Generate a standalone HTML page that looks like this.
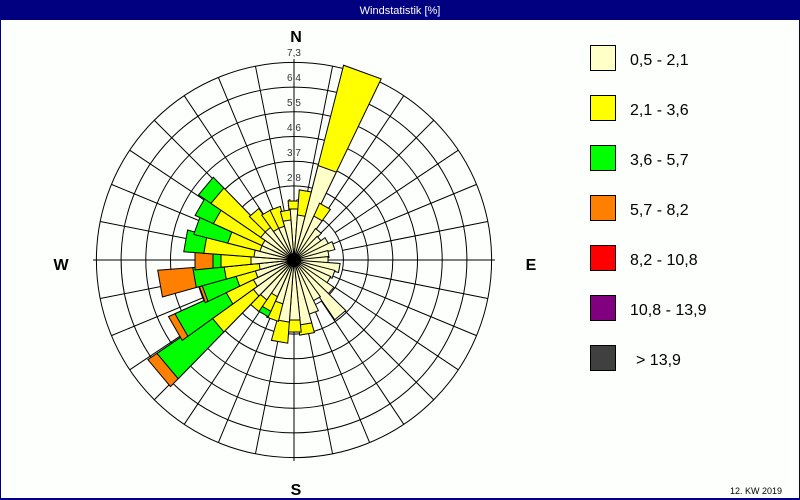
<!DOCTYPE html>
<html><head><meta charset="utf-8"><style>
html,body{margin:0;padding:0;background:#fff}
svg{display:block}
.w{stroke:#000;stroke-width:1;vector-effect:non-scaling-stroke;stroke-linejoin:miter}
.c{fill:#FFFFC8}.y{fill:#FFFF00}.g{fill:#00FF00}.o{fill:#FF8000}
.sp line{stroke:#000;stroke-width:1}
</style></head><body>
<svg width="800" height="500" viewBox="0 0 800 500" xmlns="http://www.w3.org/2000/svg" font-family="Liberation Sans, sans-serif">
<rect x="0" y="0" width="800" height="500" fill="#fcfffc"/>
<rect x="0" y="0" width="800" height="20" fill="#000080"/>
<rect x="0" y="0" width="1" height="500" fill="#000080"/>
<rect x="799" y="0" width="1" height="500" fill="#000080"/>
<rect x="0" y="498" width="800" height="2" fill="#000080"/>
<text x="400" y="14" fill="#fff" font-size="11" text-anchor="middle">Windstatistik [%]</text>

<g transform="translate(294,260)">
 <g fill="none" stroke="#000" stroke-width="1">
  <circle r="24.7"/><circle r="49.4"/><circle r="74.1"/><circle r="98.8"/><circle r="123.5"/><circle r="148.2"/><circle r="172.9"/><circle r="197.6"/>
 </g>
 <g class="sp">
  <line x1="-201" y1="0" x2="201" y2="0"/><line x1="0" y1="-201" x2="0" y2="201"/>
  <line x1="0" y1="0" x2="0" y2="-197.6" transform="rotate(45)"/><line x1="0" y1="0" x2="0" y2="-197.6" transform="rotate(135)"/>
  <line x1="0" y1="0" x2="0" y2="-197.6" transform="rotate(225)"/><line x1="0" y1="0" x2="0" y2="-197.6" transform="rotate(315)"/>
  <line x1="0" y1="-24.7" x2="0" y2="-197.6" transform="rotate(22.5)"/><line x1="0" y1="-24.7" x2="0" y2="-197.6" transform="rotate(67.5)"/>
  <line x1="0" y1="-24.7" x2="0" y2="-197.6" transform="rotate(112.5)"/><line x1="0" y1="-24.7" x2="0" y2="-197.6" transform="rotate(157.5)"/>
  <line x1="0" y1="-24.7" x2="0" y2="-197.6" transform="rotate(202.5)"/><line x1="0" y1="-24.7" x2="0" y2="-197.6" transform="rotate(247.5)"/>
  <line x1="0" y1="-24.7" x2="0" y2="-197.6" transform="rotate(292.5)"/><line x1="0" y1="-24.7" x2="0" y2="-197.6" transform="rotate(337.5)"/>
  <line x1="0" y1="-49.4" x2="0" y2="-197.6" transform="rotate(11.25)"/><line x1="0" y1="-49.4" x2="0" y2="-197.6" transform="rotate(33.75)"/>
  <line x1="0" y1="-49.4" x2="0" y2="-197.6" transform="rotate(56.25)"/><line x1="0" y1="-49.4" x2="0" y2="-197.6" transform="rotate(78.75)"/>
  <line x1="0" y1="-49.4" x2="0" y2="-197.6" transform="rotate(101.25)"/><line x1="0" y1="-49.4" x2="0" y2="-197.6" transform="rotate(123.75)"/>
  <line x1="0" y1="-49.4" x2="0" y2="-197.6" transform="rotate(146.25)"/><line x1="0" y1="-49.4" x2="0" y2="-197.6" transform="rotate(168.75)"/>
  <line x1="0" y1="-49.4" x2="0" y2="-197.6" transform="rotate(191.25)"/><line x1="0" y1="-49.4" x2="0" y2="-197.6" transform="rotate(213.75)"/>
  <line x1="0" y1="-49.4" x2="0" y2="-197.6" transform="rotate(236.25)"/><line x1="0" y1="-49.4" x2="0" y2="-197.6" transform="rotate(258.75)"/>
  <line x1="0" y1="-49.4" x2="0" y2="-197.6" transform="rotate(281.25)"/><line x1="0" y1="-49.4" x2="0" y2="-197.6" transform="rotate(303.75)"/>
  <line x1="0" y1="-49.4" x2="0" y2="-197.6" transform="rotate(326.25)"/><line x1="0" y1="-49.4" x2="0" y2="-197.6" transform="rotate(348.75)"/>
 </g>
 <g font-size="10" fill="#333" text-anchor="middle">
  <text x="0" y="-204">7,3</text><text x="0" y="-179">6,4</text><text x="0" y="-154">5,5</text><text x="0" y="-129">4,6</text>
  <text x="0" y="-104">3,7</text><text x="0" y="-79">2,8</text><text x="0" y="-54">1,8</text><text x="0" y="-29">0,9</text>
 </g>
 <g>
  <polygon class="w y" points="0,0 -.1,-1 .1,-1" transform="rotate(0) scale(59)"/>
  <polygon class="w c" points="0,0 -.1,-1 .1,-1" transform="rotate(0) scale(51)"/>
  <polygon class="w y" points="0,0 -.1,-1 .1,-1" transform="rotate(10) scale(70)"/>
  <polygon class="w c" points="0,0 -.1,-1 .1,-1" transform="rotate(10) scale(45)"/>
  <polygon class="w y" points="0,0 -.1,-1 .1,-1" transform="rotate(20) scale(200)"/>
  <polygon class="w c" points="0,0 -.1,-1 .1,-1" transform="rotate(20) scale(97)"/>
  <polygon class="w y" points="0,0 -.1,-1 .1,-1" transform="rotate(30) scale(62)"/>
  <polygon class="w c" points="0,0 -.1,-1 .1,-1" transform="rotate(30) scale(48)"/>
  <polygon class="w c" points="0,0 -.1,-1 .1,-1" transform="rotate(40) scale(38)"/>
  <polygon class="w c" points="0,0 -.1,-1 .1,-1" transform="rotate(50) scale(33)"/>
  <polygon class="w c" points="0,0 -.1,-1 .1,-1" transform="rotate(60) scale(38)"/>
  <polygon class="w c" points="0,0 -.1,-1 .1,-1" transform="rotate(70) scale(42)"/>
  <polygon class="w c" points="0,0 -.1,-1 .1,-1" transform="rotate(80) scale(35)"/>
  <polygon class="w c" points="0,0 -.1,-1 .1,-1" transform="rotate(90) scale(34)"/>
  <polygon class="w c" points="0,0 -.1,-1 .1,-1" transform="rotate(100) scale(46)"/>
  <polygon class="w c" points="0,0 -.1,-1 .1,-1" transform="rotate(110) scale(42)"/>
  <polygon class="w c" points="0,0 -.1,-1 .1,-1" transform="rotate(120) scale(40)"/>
  <polygon class="w c" points="0,0 -.1,-1 .1,-1" transform="rotate(130) scale(48)"/>
  <polygon class="w c" points="0,0 -.1,-1 .1,-1" transform="rotate(140) scale(72)"/>
  <polygon class="w c" points="0,0 -.1,-1 .1,-1" transform="rotate(150) scale(45)"/>
  <polygon class="w c" points="0,0 -.1,-1 .1,-1" transform="rotate(160) scale(56)"/>
  <polygon class="w y" points="0,0 -.1,-1 .1,-1" transform="rotate(170) scale(75)"/>
  <polygon class="w c" points="0,0 -.1,-1 .1,-1" transform="rotate(170) scale(65)"/>
  <polygon class="w y" points="0,0 -.1,-1 .1,-1" transform="rotate(180) scale(72)"/>
  <polygon class="w c" points="0,0 -.1,-1 .1,-1" transform="rotate(180) scale(60)"/>
  <polygon class="w y" points="0,0 -.1,-1 .1,-1" transform="rotate(190) scale(83)"/>
  <polygon class="w c" points="0,0 -.1,-1 .1,-1" transform="rotate(190) scale(62)"/>
  <polygon class="w y" points="0,0 -.1,-1 .1,-1" transform="rotate(200) scale(63)"/>
  <polygon class="w c" points="0,0 -.1,-1 .1,-1" transform="rotate(200) scale(45)"/>
  <polygon class="w g" points="0,0 -.1,-1 .1,-1" transform="rotate(210) scale(62)"/>
  <polygon class="w y" points="0,0 -.1,-1 .1,-1" transform="rotate(210) scale(56)"/>
  <polygon class="w c" points="0,0 -.1,-1 .1,-1" transform="rotate(210) scale(40)"/>
  <polygon class="w y" points="0,0 -.1,-1 .1,-1" transform="rotate(220) scale(62)"/>
  <polygon class="w c" points="0,0 -.1,-1 .1,-1" transform="rotate(220) scale(48)"/>
  <polygon class="w o" points="0,0 -.1,-1 .1,-1" transform="rotate(230) scale(176)"/>
  <polygon class="w g" points="0,0 -.1,-1 .1,-1" transform="rotate(230) scale(165)"/>
  <polygon class="w y" points="0,0 -.1,-1 .1,-1" transform="rotate(230) scale(100)"/>
  <polygon class="w c" points="0,0 -.1,-1 .1,-1" transform="rotate(230) scale(50)"/>
  <polygon class="w o" points="0,0 -.1,-1 .1,-1" transform="rotate(240) scale(137)"/>
  <polygon class="w g" points="0,0 -.1,-1 .1,-1" transform="rotate(240) scale(130)"/>
  <polygon class="w y" points="0,0 -.1,-1 .1,-1" transform="rotate(240) scale(75)"/>
  <polygon class="w c" points="0,0 -.1,-1 .1,-1" transform="rotate(240) scale(45)"/>
  <polygon class="w o" points="0,0 -.1,-1 .1,-1" transform="rotate(250) scale(98)"/>
  <polygon class="w g" points="0,0 -.1,-1 .1,-1" transform="rotate(250) scale(95)"/>
  <polygon class="w y" points="0,0 -.1,-1 .1,-1" transform="rotate(250) scale(60)"/>
  <polygon class="w c" points="0,0 -.1,-1 .1,-1" transform="rotate(250) scale(40)"/>
  <polygon class="w o" points="0,0 -.1,-1 .1,-1" transform="rotate(260) scale(136)"/>
  <polygon class="w g" points="0,0 -.1,-1 .1,-1" transform="rotate(260) scale(101)"/>
  <polygon class="w y" points="0,0 -.1,-1 .1,-1" transform="rotate(260) scale(70)"/>
  <polygon class="w c" points="0,0 -.1,-1 .1,-1" transform="rotate(260) scale(35)"/>
  <polygon class="w o" points="0,0 -.1,-1 .1,-1" transform="rotate(270) scale(99)"/>
  <polygon class="w g" points="0,0 -.1,-1 .1,-1" transform="rotate(270) scale(81)"/>
  <polygon class="w y" points="0,0 -.1,-1 .1,-1" transform="rotate(270) scale(73)"/>
  <polygon class="w c" points="0,0 -.1,-1 .1,-1" transform="rotate(270) scale(43)"/>
  <polygon class="w g" points="0,0 -.1,-1 .1,-1" transform="rotate(280) scale(110)"/>
  <polygon class="w y" points="0,0 -.1,-1 .1,-1" transform="rotate(280) scale(90)"/>
  <polygon class="w c" points="0,0 -.1,-1 .1,-1" transform="rotate(280) scale(40)"/>
  <polygon class="w g" points="0,0 -.1,-1 .1,-1" transform="rotate(290) scale(103)"/>
  <polygon class="w y" points="0,0 -.1,-1 .1,-1" transform="rotate(290) scale(68)"/>
  <polygon class="w c" points="0,0 -.1,-1 .1,-1" transform="rotate(290) scale(35)"/>
  <polygon class="w g" points="0,0 -.1,-1 .1,-1" transform="rotate(300) scale(108)"/>
  <polygon class="w y" points="0,0 -.1,-1 .1,-1" transform="rotate(300) scale(88)"/>
  <polygon class="w c" points="0,0 -.1,-1 .1,-1" transform="rotate(300) scale(35)"/>
  <polygon class="w g" points="0,0 -.1,-1 .1,-1" transform="rotate(310) scale(115)"/>
  <polygon class="w y" points="0,0 -.1,-1 .1,-1" transform="rotate(310) scale(100)"/>
  <polygon class="w c" points="0,0 -.1,-1 .1,-1" transform="rotate(310) scale(40)"/>
  <polygon class="w y" points="0,0 -.1,-1 .1,-1" transform="rotate(320) scale(62)"/>
  <polygon class="w c" points="0,0 -.1,-1 .1,-1" transform="rotate(320) scale(40)"/>
  <polygon class="w y" points="0,0 -.1,-1 .1,-1" transform="rotate(330) scale(55)"/>
  <polygon class="w c" points="0,0 -.1,-1 .1,-1" transform="rotate(330) scale(35)"/>
  <polygon class="w y" points="0,0 -.1,-1 .1,-1" transform="rotate(340) scale(55)"/>
  <polygon class="w c" points="0,0 -.1,-1 .1,-1" transform="rotate(340) scale(35)"/>
  <polygon class="w y" points="0,0 -.1,-1 .1,-1" transform="rotate(350) scale(50)"/>
  <polygon class="w c" points="0,0 -.1,-1 .1,-1" transform="rotate(350) scale(40)"/>
 </g>
 <circle r="7" fill="#000"/>
</g>

<g font-size="16" font-weight="bold" fill="#000" text-anchor="middle">
 <text x="296" y="42">N</text>
 <text x="296" y="495">S</text>
 <text x="61" y="270">W</text>
 <text x="531" y="270">E</text>
</g>

<g stroke="#000" stroke-width="1">
 <rect x="590.5" y="45.5" width="25" height="25" fill="#FFFFC8"/>
 <rect x="590.5" y="95.5" width="25" height="25" fill="#FFFF00"/>
 <rect x="590.5" y="145.5" width="25" height="25" fill="#00FF00"/>
 <rect x="590.5" y="195.5" width="25" height="25" fill="#FF8000"/>
 <rect x="590.5" y="245.5" width="25" height="25" fill="#FF0000"/>
 <rect x="590.5" y="295.5" width="25" height="25" fill="#800080"/>
 <rect x="590.5" y="345.5" width="25" height="25" fill="#404040"/>
</g>
<g font-size="16" fill="#000">
 <text x="630" y="65">0,5 - 2,1</text>
 <text x="630" y="115">2,1 - 3,6</text>
 <text x="630" y="165">3,6 - 5,7</text>
 <text x="630" y="215">5,7 - 8,2</text>
 <text x="630" y="265">8,2 - 10,8</text>
 <text x="630" y="315">10,8 - 13,9</text>
 <text x="636" y="365">&gt; 13,9</text>
</g>
<text x="782" y="494" font-size="9" fill="#000" text-anchor="end">12. KW 2019</text>
</svg>
</body></html>
